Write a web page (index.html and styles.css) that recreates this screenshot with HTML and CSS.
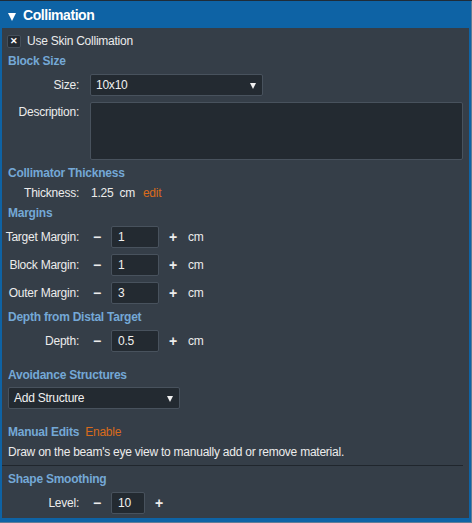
FILE: index.html
```html
<!DOCTYPE html>
<html lang="en">
<head>
    <meta charset="UTF-8">
    <meta name="viewport" content="width=device-width, initial-scale=1.0">
    <title>Collimation</title>
    <link rel="stylesheet" href="styles.css">
</head>
<body>

    <div class="panel">
        <div class="panel-header"><span class="caret"></span>Collimation</div>
        <div class="panel-body">
            <label class="check"><span class="checkbox">&#10005;</span>Use Skin Collimation</label>

            <h3 class="section tight">Block Size</h3>
            <div class="field">
                <span class="field-label">Size:</span>
                <div class="select size-select">10x10<span class="arrow"></span></div>
            </div>
            <div class="field field-top">
                <span class="field-label">Description:</span>
                <div class="textarea"></div>
            </div>

            <h3 class="section">Collimator Thickness</h3>
            <div class="field field-text">
                <span class="field-label">Thickness:</span>
                <span class="value">1.25</span>
                <span class="unit">cm</span>
                <a class="link" href="#">edit</a>
            </div>

            <h3 class="section tight">Margins</h3>
            <div class="field">
                <span class="field-label">Target Margin:</span>
                <span class="step">&minus;</span>
                <div class="num">1</div>
                <span class="step">+</span>
                <span class="unit">cm</span>
            </div>
            <div class="field">
                <span class="field-label">Block Margin:</span>
                <span class="step">&minus;</span>
                <div class="num">1</div>
                <span class="step">+</span>
                <span class="unit">cm</span>
            </div>
            <div class="field">
                <span class="field-label">Outer Margin:</span>
                <span class="step">&minus;</span>
                <div class="num">3</div>
                <span class="step">+</span>
                <span class="unit">cm</span>
            </div>

            <h3 class="section">Depth from Distal Target</h3>
            <div class="field">
                <span class="field-label">Depth:</span>
                <span class="step">&minus;</span>
                <div class="num">0.5</div>
                <span class="step">+</span>
                <span class="unit">cm</span>
            </div>

            <h3 class="section spaced">Avoidance Structures</h3>
            <div class="select structure-select">Add Structure<span class="arrow"></span></div>

            <h3 class="section spaced">Manual Edits <a class="link" href="#">Enable</a></h3>
            <p class="note">Draw on the beam's eye view to manually add or remove material.</p>

            <hr class="divider">

            <h3 class="section">Shape Smoothing</h3>
            <div class="field">
                <span class="field-label">Level:</span>
                <span class="step">&minus;</span>
                <div class="num num-short">10</div>
                <span class="step">+</span>
            </div>
        </div>
    </div>

</body>
</html>
```

FILE: styles.css
```css
body {
    margin: 0;
    padding: 0;
    background: #5f7d98;
    border-top: 1px solid #1f2c38;
    font-family: "Liberation Sans", Arial, sans-serif;
    font-size: 12px;
    letter-spacing: -0.24px;
    color: #ececec;
}
.panel {
    width: 467px;
    border: 2px solid #0e63a5;
    border-top: none;
    border-bottom-width: 4px;
    background: #353e48;
}
.panel-header {
    height: 27px;
    margin: 0 -2px;
    padding-left: 8px;
    background: #0e63a5;
    color: #fff;
    font-size: 14px;
    font-weight: bold;
    letter-spacing: -0.45px;
    line-height: 28px;
}
.caret {
    display: inline-block;
    margin-right: 7px;
    border-left: 4.5px solid transparent;
    border-right: 4.5px solid transparent;
    border-top: 8px solid #fff;
    vertical-align: -1px;
}
.panel-body {
    padding: 5px 6px 4px 0;
}
.check {
    display: flex;
    align-items: center;
    height: 16px;
    padding-left: 5px;
}
.checkbox {
    box-sizing: border-box;
    width: 14px;
    height: 13px;
    margin-right: 6px;
    background: #242b33;
    border: 1px solid #46505b;
    border-radius: 2px;
    color: #fff;
    font-size: 9px;
    font-weight: bold;
    line-height: 11px;
    text-align: center;
    letter-spacing: 0;
}
.section {
    margin: 5px 0 0;
    padding-left: 6px;
    font-size: 12px;
    font-weight: bold;
    line-height: 16px;
    color: #74a8d6;
}
.section.tight {
    margin-top: 4px;
}
.section.spaced {
    margin-top: 15px;
}
.link {
    color: #d96b1c;
    text-decoration: none;
    font-weight: normal;
}
.section .link {
    margin-left: 3px;
}
.field {
    display: flex;
    align-items: center;
    margin-top: 5px;
}
.field + .field {
    margin-top: 6px;
}
.field-top {
    align-items: flex-start;
}
.field-text {
    margin-top: 4px;
    line-height: 16px;
}
.field-label {
    width: 77px;
    flex-shrink: 0;
    text-align: right;
}
.field-top .field-label {
    line-height: 20px;
}
.select,
.textarea,
.num {
    box-sizing: border-box;
    background: #232a31;
    border: 1px solid #48525d;
    border-radius: 2px;
    color: #f0f0f0;
}
.select {
    position: relative;
    height: 22px;
    line-height: 20px;
    padding-left: 5px;
}
.size-select {
    width: 173px;
    margin-left: 11px;
}
.structure-select {
    width: 172px;
    margin: 4px 0 0 6px;
}
.arrow {
    position: absolute;
    right: 6px;
    top: 8px;
    border-left: 3.5px solid transparent;
    border-right: 3.5px solid transparent;
    border-top: 6px solid #f0f0f0;
}
.textarea {
    flex: 1;
    height: 58px;
    margin-left: 11px;
}
.value {
    margin-left: 12px;
}
.unit {
    margin-left: 6px;
}
.field-text .link {
    margin-left: 8px;
}
.step {
    width: 20px;
    margin-left: 8px;
    text-align: center;
    font-size: 14px;
    font-weight: bold;
    line-height: 16px;
}
.num {
    width: 48px;
    height: 22px;
    margin-left: 4px;
    padding-left: 6px;
    line-height: 20px;
}
.num-short {
    width: 34px;
}
.num + .step {
    margin-left: 4px;
}
.step + .unit {
    margin-left: 5px;
}
.note {
    margin: 4px 0 0;
    padding-left: 6px;
    line-height: 16px;
}
.divider {
    margin: 5px 0 0;
    border: none;
    border-top: 1px solid #20262d;
}
```
